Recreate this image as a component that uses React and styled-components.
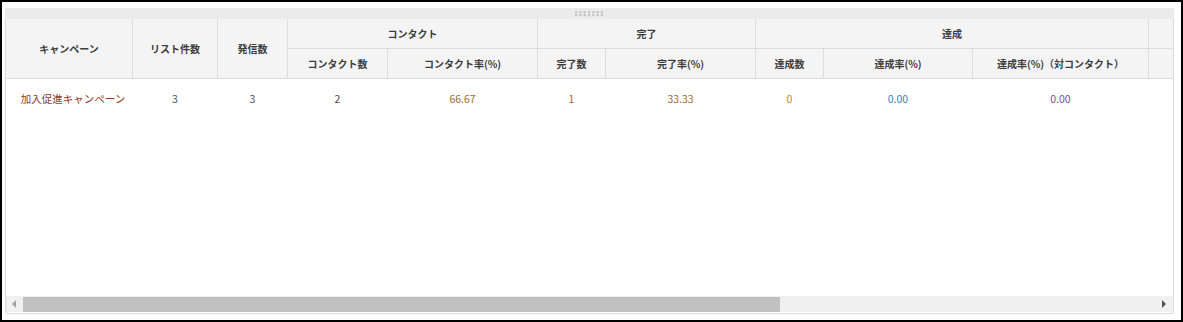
import React from "react";
import styled, { createGlobalStyle } from "styled-components";

const GlobalStyle = createGlobalStyle`
	html, body {
		margin: 0;
		padding: 0;
		background: #ffffff;
	}
	body {
		font-family: "Noto Sans CJK JP", "Noto Sans", sans-serif;
	}
`;

const Frame = styled.div`
	box-sizing: border-box;
	width: 1183px;
	height: 322px;
	border: 2px solid #000;
	padding: 6px 7px 6px 3px;
	display: flex;
	flex-direction: column;
`;

const Panel = styled.div`
	flex: 1;
	display: flex;
	flex-direction: column;
`;

const GripBar = styled.div`
	height: 11px;
	background: #ebebeb;
	display: flex;
	justify-content: center;
	align-items: center;
`;

const Box = styled.div`
	flex: 1;
	display: flex;
	flex-direction: column;
	border: 1px solid #dadada;
	border-top: none;
	border-radius: 0 0 3px 3px;
	overflow: hidden;
`;

const TableArea = styled.div`
	flex: 1;
`;

const Table = styled.table`
	border-collapse: collapse;
	table-layout: fixed;
	width: 1169px;
	margin-left: -1px;
`;

const Th = styled.th`
	background: #f4f4f4;
	border: 1px solid #dcdcdc;
	border-top: none;
	height: 29px;
	padding: 0;
	font-size: 10px;
	font-weight: bold;
	color: #3c3c3c;
	text-align: center;
	white-space: nowrap;
`;

const Td = styled.td`
	height: 38px;
	padding: 0 0 0 ${({ $pad }) => $pad || 0}px;
	font-size: 10.5px;
	text-align: center;
	color: ${({ color }) => color || "#444"};
	white-space: nowrap;
`;

const Scrollbar = styled.div`
	height: 16px;
	background: #f0f0f0;
	display: flex;
	align-items: center;
	margin-bottom: 1px;
`;

const Arrow = styled.div`
	width: 17px;
	display: flex;
	justify-content: center;
	align-items: center;
`;

const Track = styled.div`
	flex: 1;
	height: 15px;
	display: flex;
	align-items: center;
`;

const Thumb = styled.div`
	height: 15px;
	width: 757px;
	background: #c1c1c1;
`;

const Grip = () => (
	<svg width="31" height="6" viewBox="0 0 31 6">
		{[0, 1, 2, 3, 4, 5, 6].map((i) =>
			[0, 3].map((y) => (
				<rect key={`${i}-${y}`} x={i * 4.3 + 1} y={y} width="2.2" height="2.2" fill="#c4c4c4" />
			))
		)}
	</svg>
);

const cols = [127, 85, 70, 100, 150, 68, 150, 68, 149, 176, 26];

const row = [
	{ v: "加入促進キャンペーン", c: "#8e3b24", pad: 8 },
	{ v: "3", c: "#3d5678" },
	{ v: "3", c: "#3d5678" },
	{ v: "2", c: "#4a4a4a" },
	{ v: "66.67", c: "#a3682c" },
	{ v: "1", c: "#b3641e" },
	{ v: "33.33", c: "#a3682c" },
	{ v: "0", c: "#c7861a" },
	{ v: "0.00", c: "#3a7fc6" },
	{ v: "0.00", c: "#7c4d9f" },
	{ v: "", c: "#444" },
];

const App = () => {
	return (
		<>
			<GlobalStyle />
			<Frame>
				<Panel>
					<GripBar>
						<Grip />
					</GripBar>
					<Box>
						<TableArea>
							<Table>
								<colgroup>
									{cols.map((w, i) => (
										<col key={i} style={{ width: w }} />
									))}
								</colgroup>
								<thead>
									<tr>
										<Th rowSpan={2}>キャンペーン</Th>
										<Th rowSpan={2}>リスト件数</Th>
										<Th rowSpan={2}>発信数</Th>
										<Th colSpan={2}>コンタクト</Th>
										<Th colSpan={2}>完了</Th>
										<Th colSpan={3}>達成</Th>
										<Th></Th>
									</tr>
									<tr>
										<Th>コンタクト数</Th>
										<Th>コンタクト率(%)</Th>
										<Th>完了数</Th>
										<Th>完了率(%)</Th>
										<Th>達成数</Th>
										<Th>達成率(%)</Th>
										<Th>達成率(%)（対コンタクト）</Th>
										<Th></Th>
									</tr>
								</thead>
								<tbody>
									<tr>
										{row.map((cell, i) => (
											<Td key={i} color={cell.c} $pad={cell.pad}>
												{cell.v}
											</Td>
										))}
									</tr>
								</tbody>
							</Table>
						</TableArea>
						<Scrollbar>
							<Arrow>
								<svg width="5" height="8" viewBox="0 0 5 8">
									<path d="M4 0 L0 4 L4 8 Z" fill="#a3a3a3" />
								</svg>
							</Arrow>
							<Track>
								<Thumb />
							</Track>
							<Arrow>
								<svg width="5" height="8" viewBox="0 0 5 8">
									<path d="M0 0 L4 4 L0 8 Z" fill="#505050" />
								</svg>
							</Arrow>
						</Scrollbar>
					</Box>
				</Panel>
			</Frame>
		</>
	);
};

export default App;
